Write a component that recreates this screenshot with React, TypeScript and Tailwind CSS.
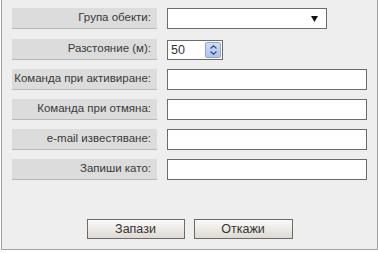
import React from "react";

const font = { fontFamily: '"Liberation Sans", Arial, sans-serif' };

function Label({ text }: { text: string }) {
  return (
    <div className="w-[145px] h-[21px] bg-[#dcdcdc] border-b border-[#b9b9b9] flex items-center justify-end pr-[6px] text-[11.5px] text-[#3a3a3a] leading-none shrink-0">
      {text}
    </div>
  );
}

function TextBox() {
  return <div className="w-[200px] h-[21px] bg-white border border-[#6b6b6b]" />;
}

export default function App() {
  return (
    <div className="w-[378px] h-[253px] bg-white pl-[1px]" style={font}>
      <div className="w-[377px] h-[250px] bg-[#eeeeee] border-x border-b border-[#a3a3a3] flex flex-col pl-[10px] pt-[8px] pb-[10px]">
        <div className="flex items-start gap-[10px]">
          <Label text="Група обекти:" />
          <div className="w-[160px] h-[21px] bg-white border border-[#6b6b6b] flex items-center justify-end pr-[8px]">
            <svg width="7" height="6" viewBox="0 0 7 6">
              <path d="M0 0 H7 L3.5 6 Z" fill="#111" />
            </svg>
          </div>
        </div>
        <div className="flex items-start gap-[10px] mt-[10px]">
          <Label text="Разстояние (м):" />
          <div className="w-[56px] h-[20px] mt-[1px] bg-white border border-[#6b6b6b] flex items-center pl-[3px] pr-[1px] text-[12.5px] text-[#333]">
            <span className="flex-1">50</span>
            <div className="w-[16px] h-[16px] rounded-[2px] border border-[#8fa9d6] bg-gradient-to-b from-[#cfdcf5] to-[#aec4ec] flex flex-col items-center justify-center gap-[2px]">
              <svg width="7" height="4" viewBox="0 0 7 4">
                <path d="M0.5 3.5 L3.5 0.8 L6.5 3.5" fill="none" stroke="#35508a" strokeWidth="1.3" />
              </svg>
              <svg width="7" height="4" viewBox="0 0 7 4">
                <path d="M0.5 0.5 L3.5 3.2 L6.5 0.5" fill="none" stroke="#35508a" strokeWidth="1.3" />
              </svg>
            </div>
          </div>
        </div>
        <div className="flex items-start gap-[10px] mt-[9px]">
          <Label text="Команда при активиране:" />
          <TextBox />
        </div>
        <div className="flex items-start gap-[10px] mt-[9px]">
          <Label text="Команда при отмяна:" />
          <TextBox />
        </div>
        <div className="flex items-start gap-[10px] mt-[9px]">
          <Label text="e-mail известяване:" />
          <TextBox />
        </div>
        <div className="flex items-start gap-[10px] mt-[9px]">
          <Label text="Запиши като:" />
          <TextBox />
        </div>
        <div className="mt-auto flex justify-center gap-[9px] pl-[64px] pr-[74px]">
          <button className="w-[98px] h-[20px] border border-[#6b6b6b] bg-gradient-to-b from-[#fbfaf9] to-[#dedad3] text-[12.5px] text-[#333] leading-none">
            Запази
          </button>
          <button className="w-[99px] h-[20px] border border-[#6b6b6b] bg-gradient-to-b from-[#fbfaf9] to-[#dedad3] text-[12.5px] text-[#333] leading-none">
            Откажи
          </button>
        </div>
      </div>
    </div>
  );
}
